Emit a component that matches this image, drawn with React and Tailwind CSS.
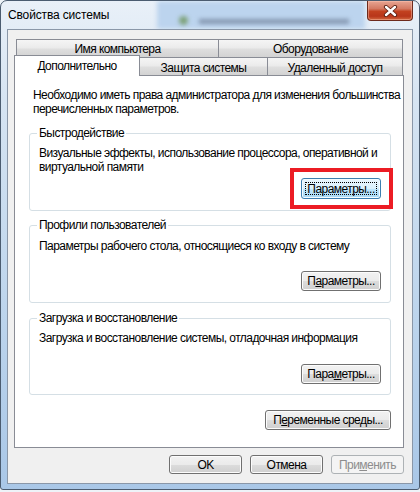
import React from 'react'

const btnBase =
  'relative flex items-center justify-center rounded-[3px] border leading-[14px] whitespace-nowrap'
const btnNormal =
  'border-[#707070] bg-[linear-gradient(#f2f2f2,#ebebeb_50%,#dddddd_50%,#cfcfcf)] shadow-[inset_0_0_0_1px_#fcfcfc] text-black'
const btnFocused =
  'border-[#3c7fb1] bg-[linear-gradient(#eaf6fd,#d9f0fc_50%,#bee6fd_50%,#a7d9f5)] shadow-[inset_0_0_0_1px_#f4fbfe] text-black'
const btnDisabled = 'border-[#adb2b5] bg-[#f4f4f4] text-[#8d8d8d]'

function Button({ children, className = '', focused = false, disabled = false }) {
  const look = disabled ? btnDisabled : focused ? btnFocused : btnNormal
  return (
    <button type="button" className={`${btnBase} ${look} ${className}`}>
      {focused && <span className="absolute inset-[3px] border border-dotted border-black" />}
      <span className="relative">{children}</span>
    </button>
  )
}

function Group({ title, className = '', children }) {
  return (
    <div className={`relative flex flex-col rounded-[3px] border border-[#d5dfe5] pl-[9px] pr-[9px] ${className}`}>
      <span className="absolute -top-[8px] left-[7px] bg-white px-[2px] leading-[14px]">{title}</span>
      {children}
    </div>
  )
}

const tab =
  'h-[18px] border border-b-0 border-[#898c95] bg-[linear-gradient(#f5f5f5,#ebebeb_45%,#dedede_55%,#d3d3d3)] text-center leading-[14px] whitespace-nowrap'

function CloseIcon() {
  return (
    <svg width="15" height="12" viewBox="0 0 15 12">
      <path d="M3 2 L12 10 M12 2 L3 10" stroke="#5b1f12" strokeWidth="4.2" strokeLinecap="round" />
      <path d="M3 2 L12 10 M12 2 L3 10" stroke="#ffffff" strokeWidth="2.4" strokeLinecap="round" />
    </svg>
  )
}

export default function App() {
  return (
    <div className="h-[492px] w-[420px] bg-[#eef3f8] font-['Liberation_Sans',sans-serif] text-[12px] text-black">
      <div className="relative h-[490px] w-[420px] overflow-hidden rounded-t-[7px] rounded-b-[3px] border border-[#4b5c70] bg-[linear-gradient(180deg,#e9f0f8_0%,#d6e4f2_20%,#bfd6ed_60%,#a9c7e7_100%)]">
        {/* blurred desktop behind the glass */}
        <div className="absolute left-[156px] top-0 h-[28px] w-[208px] bg-[#bcd4ee] blur-[2px]" />
        <div className="absolute left-[178px] top-[15px] h-[9px] w-[9px] rounded-full bg-[#7ea27a] blur-[2px]" />
        <div className="absolute left-[198px] top-[18px] h-[5px] w-[150px] bg-[#8597b0] blur-[2px]" />

        <div className="relative flex h-[28px] items-center pl-[7px] leading-[14px] tracking-[-0.15px]">
          Свойства системы
        </div>

        <div className="absolute right-[6px] top-0 flex h-[20px] w-[46px] items-center justify-center rounded-b-[4px] border border-t-0 border-[#6d2a1c] bg-[linear-gradient(#e8a593,#d47a63_40%,#c2411f_55%,#b8361a_80%,#d2683f)] shadow-[inset_0_0_0_1px_rgba(255,200,180,0.45)]">
          <CloseIcon />
        </div>

        <div className="relative mx-[6px] flex h-[455px] flex-col border border-[#8a97a8] bg-[#f0f0f0] pb-[9px] pl-[6px] pr-[8px] pt-[9px] tracking-[-0.55px]">
          <div className="flex pl-[2px]">
            <div className={`${tab} w-[203px] pt-[2px]`}>Имя компьютера</div>
            <div className={`${tab} w-[184px] border-l-0 pt-[2px]`}>Оборудование</div>
          </div>
          <div className="flex h-[18px]">
            <div className="relative z-10 -mt-[2px] h-[21px] w-[126px] border border-b-0 border-[#898c95] bg-white pt-[3px] text-center leading-[14px]">
              Дополнительно
            </div>
            <div className={`${tab} w-[128px] border-l-0 pt-[3px]`}>Защита системы</div>
            <div className={`${tab} w-[135px] border-l-0 pt-[3px]`}>Удаленный доступ</div>
          </div>

          <div className="flex flex-col border border-[#898c95] bg-white pb-[17px] pl-[14px] pr-[12px] pt-[12px]">
            <p className="whitespace-nowrap pl-[4px] leading-[14px]">
              Необходимо иметь права администратора для изменения большинства
              <br />
              перечисленных параметров.
            </p>

            <Group title="Быстродействие" className="mt-[17px] pb-[11px] pt-[12px]">
              <p className="whitespace-nowrap leading-[14px]">
                Визуальные эффекты, использование процессора, оперативной и
                <br />
                виртуальной памяти
              </p>
              <Button focused className="mt-[4px] h-[21px] w-[80px] self-end">
                Параметры...
              </Button>
              <div className="absolute left-[260px] top-[34px] h-[41px] w-[103px] border-4 border-[#ec1c24]" />
            </Group>

            <Group title="Профили пользователей" className="mt-[14px] pb-[11px] pt-[13px]">
              <p className="whitespace-nowrap leading-[14px]">Параметры рабочего стола, относящиеся ко входу в систему</p>
              <Button className="mt-[18px] h-[20px] w-[80px] self-end">
                П<span className="underline">а</span>раметры...
              </Button>
            </Group>

            <Group title="Загрузка и восстановление" className="mt-[15px] pb-[10px] pt-[12px]">
              <p className="whitespace-nowrap leading-[14px]">Загрузка и восстановление системы, отладочная информация</p>
              <Button className="mt-[19px] h-[20px] w-[80px] self-end">
                Пара<span className="underline">м</span>етры...
              </Button>
            </Group>

            <Button className="mt-[15px] h-[20px] w-[126px] self-end">
              П<span className="underline">е</span>ременные среды...
            </Button>
          </div>

          <div className="mt-[7px] flex justify-end gap-[8px]">
            <Button className="h-[19px] w-[73px]">OK</Button>
            <Button className="h-[19px] w-[73px]">Отмена</Button>
            <Button disabled className="h-[19px] w-[73px]">
              При<span className="underline">м</span>енить
            </Button>
          </div>
        </div>
      </div>
    </div>
  )
}
